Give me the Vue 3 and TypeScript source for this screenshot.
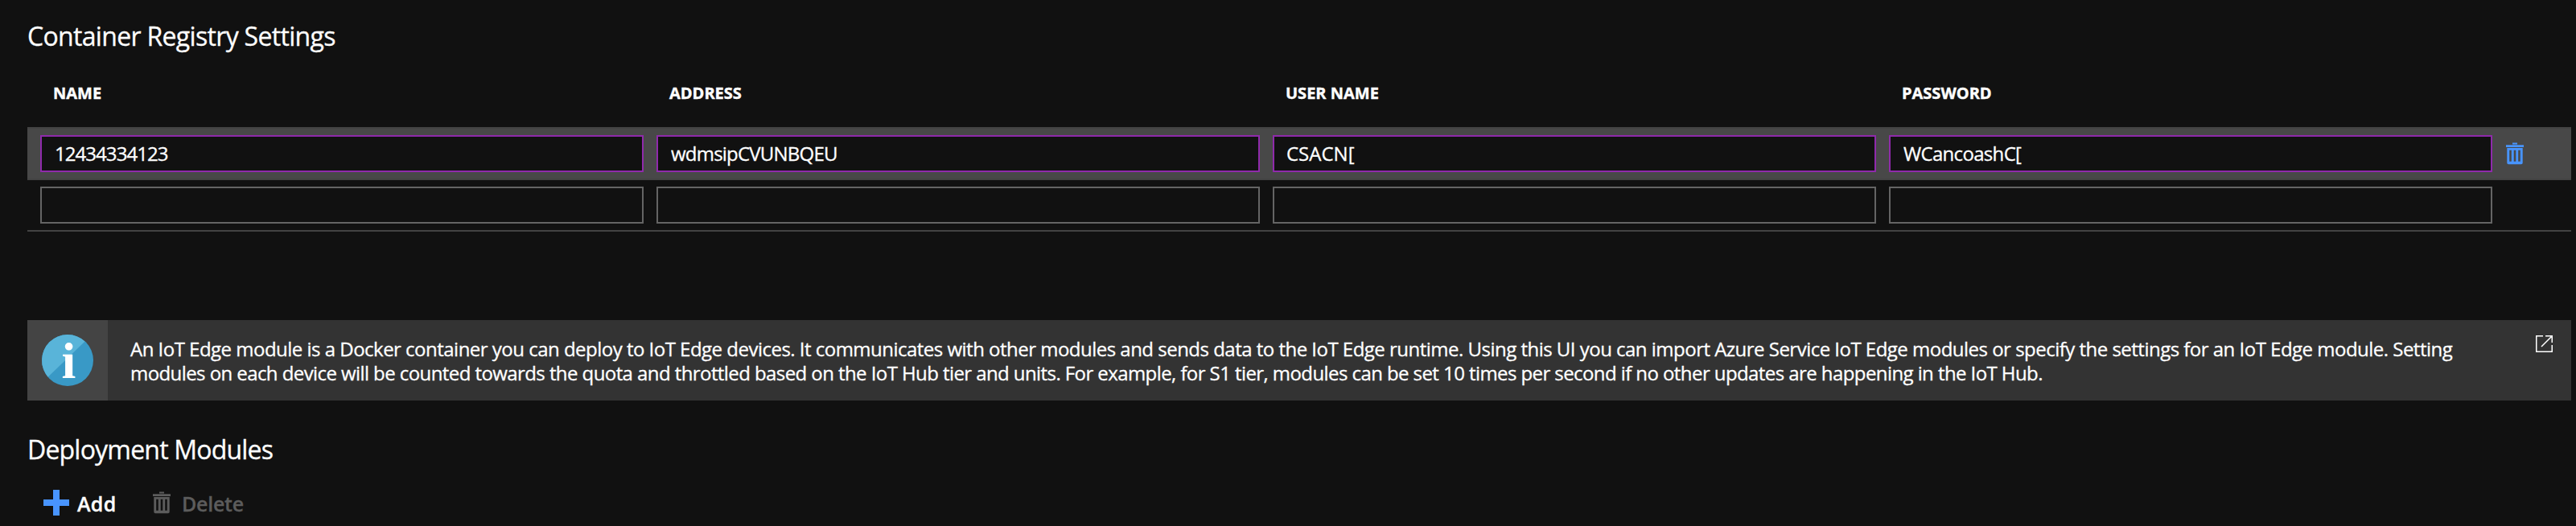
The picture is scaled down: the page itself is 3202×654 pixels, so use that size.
<script setup lang="ts">
import { reactive } from 'vue'

interface Column {
  key: string
  label: string
}

interface Registry {
  id: number
  filled: boolean
  values: Record<string, string>
}

const columns: Column[] = [
  { key: 'name', label: 'NAME' },
  { key: 'address', label: 'ADDRESS' },
  { key: 'user', label: 'USER NAME' },
  { key: 'password', label: 'PASSWORD' },
]

const registries = reactive<Registry[]>([
  {
    id: 1,
    filled: true,
    values: { name: '12434334123', address: 'wdmsipCVUNBQEU', user: 'CSACN[', password: 'WCancoashC[' },
  },
  { id: 2, filled: false, values: { name: '', address: '', user: '', password: '' } },
])

const trashPath =
  'M8 .5h6v2H8z M0 3.2h22v2.9H0z M1.3 6.9h19.4v18.6a1.8 1.8 0 0 1-1.8 1.8H3.1a1.8 1.8 0 0 1-1.8-1.8z M4.2 9.7v14h2.6v-14z M9.7 9.7v14h2.6v-14z M15.2 9.7v14h2.6v-14z'
</script>

<template>
  <main class="page">
    <h2 class="title">Container Registry Settings</h2>

    <section class="grid">
      <div class="grid-head">
        <span v-for="c in columns" :key="c.key" class="head-cell">{{ c.label }}</span>
      </div>
      <div v-for="r in registries" :key="r.id" class="grid-row" :class="{ filled: r.filled }">
        <input
          v-for="c in columns"
          :key="c.key"
          v-model="r.values[c.key]"
          class="field"
          :class="c.key"
          type="text"
          spellcheck="false"
        />
        <svg v-if="r.filled" class="trash" width="22" height="28" viewBox="0 0 22 28">
          <path :d="trashPath" fill-rule="evenodd" />
        </svg>
      </div>
    </section>

    <section class="info">
      <div class="info-icon">
        <svg class="info-badge" width="64" height="64" viewBox="0 0 64 64">
          <circle cx="32" cy="32" r="32" fill="#3999c6" />
          <path d="M53.6 8.4A32 32 0 0 0 7.6 52.7z" fill="#59b4d9" />
          <text x="33.4" y="54" class="info-letter" text-anchor="middle">i</text>
        </svg>
      </div>
      <p class="info-text">
        <span class="line first">An IoT Edge module is a Docker container you can deploy to IoT Edge devices. It communicates with other modules and sends data to the IoT Edge runtime. Using this UI you can import Azure Service IoT Edge modules or specify the settings for an IoT Edge module. Setting</span>
        <span class="line second">modules on each device will be counted towards the quota and throttled based on the IoT Hub tier and units. For example, for S1 tier, modules can be set 10 times per second if no other updates are happening in the IoT Hub.</span>
      </p>
      <svg class="popout" width="21" height="21" viewBox="0 0 21 21" fill="none" stroke="#fff" stroke-width="1.5">
        <path d="M9 .75H.75v19.5h19.5V12" />
        <path d="M12 .75h8.25V9M20 1 7 14" />
      </svg>
    </section>

    <h2 class="title modules">Deployment Modules</h2>

    <div class="toolbar">
      <button class="command add">
        <svg class="plus" width="32" height="32" viewBox="0 0 32 32">
          <path d="M12 0h8v12h12v8H20v12h-8V20H0v-8h12z" />
        </svg>
        <span class="label">Add</span>
      </button>
      <button class="command delete" disabled>
        <svg class="trash" width="22" height="28" viewBox="0 0 22 28">
          <path :d="trashPath" fill-rule="evenodd" />
        </svg>
        <span class="label">Delete</span>
      </button>
    </div>
  </main>
</template>

<style>
body {
  margin: 0;
  background: #111;
}
</style>

<style scoped>
.page {
  box-sizing: border-box;
  width: 3202px;
  height: 654px;
  padding: 22px 6px 0 34px;
  overflow: hidden;
  background: #111;
  color: #fff;
  font-family: 'Segoe UI', 'Open Sans', 'Noto Sans', sans-serif;
}

.title {
  margin: 0;
  font-size: 32px;
  font-weight: 400;
  line-height: 45px;
  letter-spacing: -0.68px;
  -webkit-text-stroke: 0.3px currentColor;
}

.title.modules {
  margin-top: 38px;
  letter-spacing: -0.8px;
}

.grid {
  margin-top: 31px;
}

.grid-head,
.grid-row {
  display: grid;
  grid-template-columns: repeat(4, 750px) 1fr;
  column-gap: 16px;
  padding-left: 16px;
}

.grid-head {
  padding-bottom: 25px;
}

.head-cell {
  padding-left: 16px;
  font-size: 20px;
  font-weight: 700;
  line-height: 35px;
  letter-spacing: 0;
  -webkit-text-stroke: 0.4px currentColor;
}

.grid-row {
  padding-top: 8px;
  padding-bottom: 8px;
  border-bottom: 2px solid #434343;
}

.grid-row.filled {
  border-top: 2px solid #434343;
  background: #484848;
}

.field {
  box-sizing: border-box;
  width: 750px;
  height: 46px;
  margin: 0;
  padding: 0 16px 2px;
  border: 2px solid #646464;
  border-radius: 0;
  outline: none;
  background: #111;
  color: #fff;
  font-family: inherit;
  font-size: 24px;
  line-height: 40px;
  letter-spacing: -0.68px;
  -webkit-text-stroke: 0.3px currentColor;
}

.filled .field {
  border-color: #8f2aab;
}

.field.name {
  letter-spacing: -0.95px;
}

.field.address {
  letter-spacing: -0.78px;
}

.field.user {
  padding-left: 15px;
  letter-spacing: 0;
}

.grid-row .trash {
  margin: 9px 0 0 1px;
  fill: #4894fe;
}

.info {
  display: flex;
  height: 100px;
  margin-top: 110px;
  background: #333;
}

.info-icon {
  display: flex;
  flex: none;
  align-items: center;
  justify-content: center;
  width: 100px;
  background: #444;
}

.info-badge {
  overflow: visible;
}

.info-letter {
  fill: #fff;
  font-family: 'Liberation Serif', serif;
  font-size: 64px;
  font-weight: 700;
}

.info-text {
  flex: 1;
  margin: 0;
  padding: 20.5px 0 0 28px;
  font-size: 24px;
  line-height: 30px;
  white-space: nowrap;
  -webkit-text-stroke: 0.3px currentColor;
}

.line {
  display: block;
}

.line.first {
  letter-spacing: -0.515px;
}

.line.second {
  letter-spacing: -0.58px;
}

.popout {
  flex: none;
  margin: 19px 23px 0 0;
}

.toolbar {
  display: flex;
  margin-top: 27px;
  padding-left: 20px;
}

.command {
  display: flex;
  height: 36px;
  padding: 0;
  border: 0;
  background: none;
  color: #fff;
  font-family: inherit;
  font-size: 25px;
  font-weight: 600;
  line-height: 36px;
  -webkit-text-stroke: 0.3px currentColor;
}

.plus {
  margin-top: 1px;
  fill: #4894fe;
}

.add {
  width: 136px;
}

.add .label {
  margin-left: 10px;
  letter-spacing: 0.3px;
}

.delete {
  color: #5c5c5c;
}

.delete .trash {
  margin-top: 3px;
  fill: #5c5c5c;
}

.delete .label {
  margin-left: 14px;
  letter-spacing: -0.25px;
}
</style>
